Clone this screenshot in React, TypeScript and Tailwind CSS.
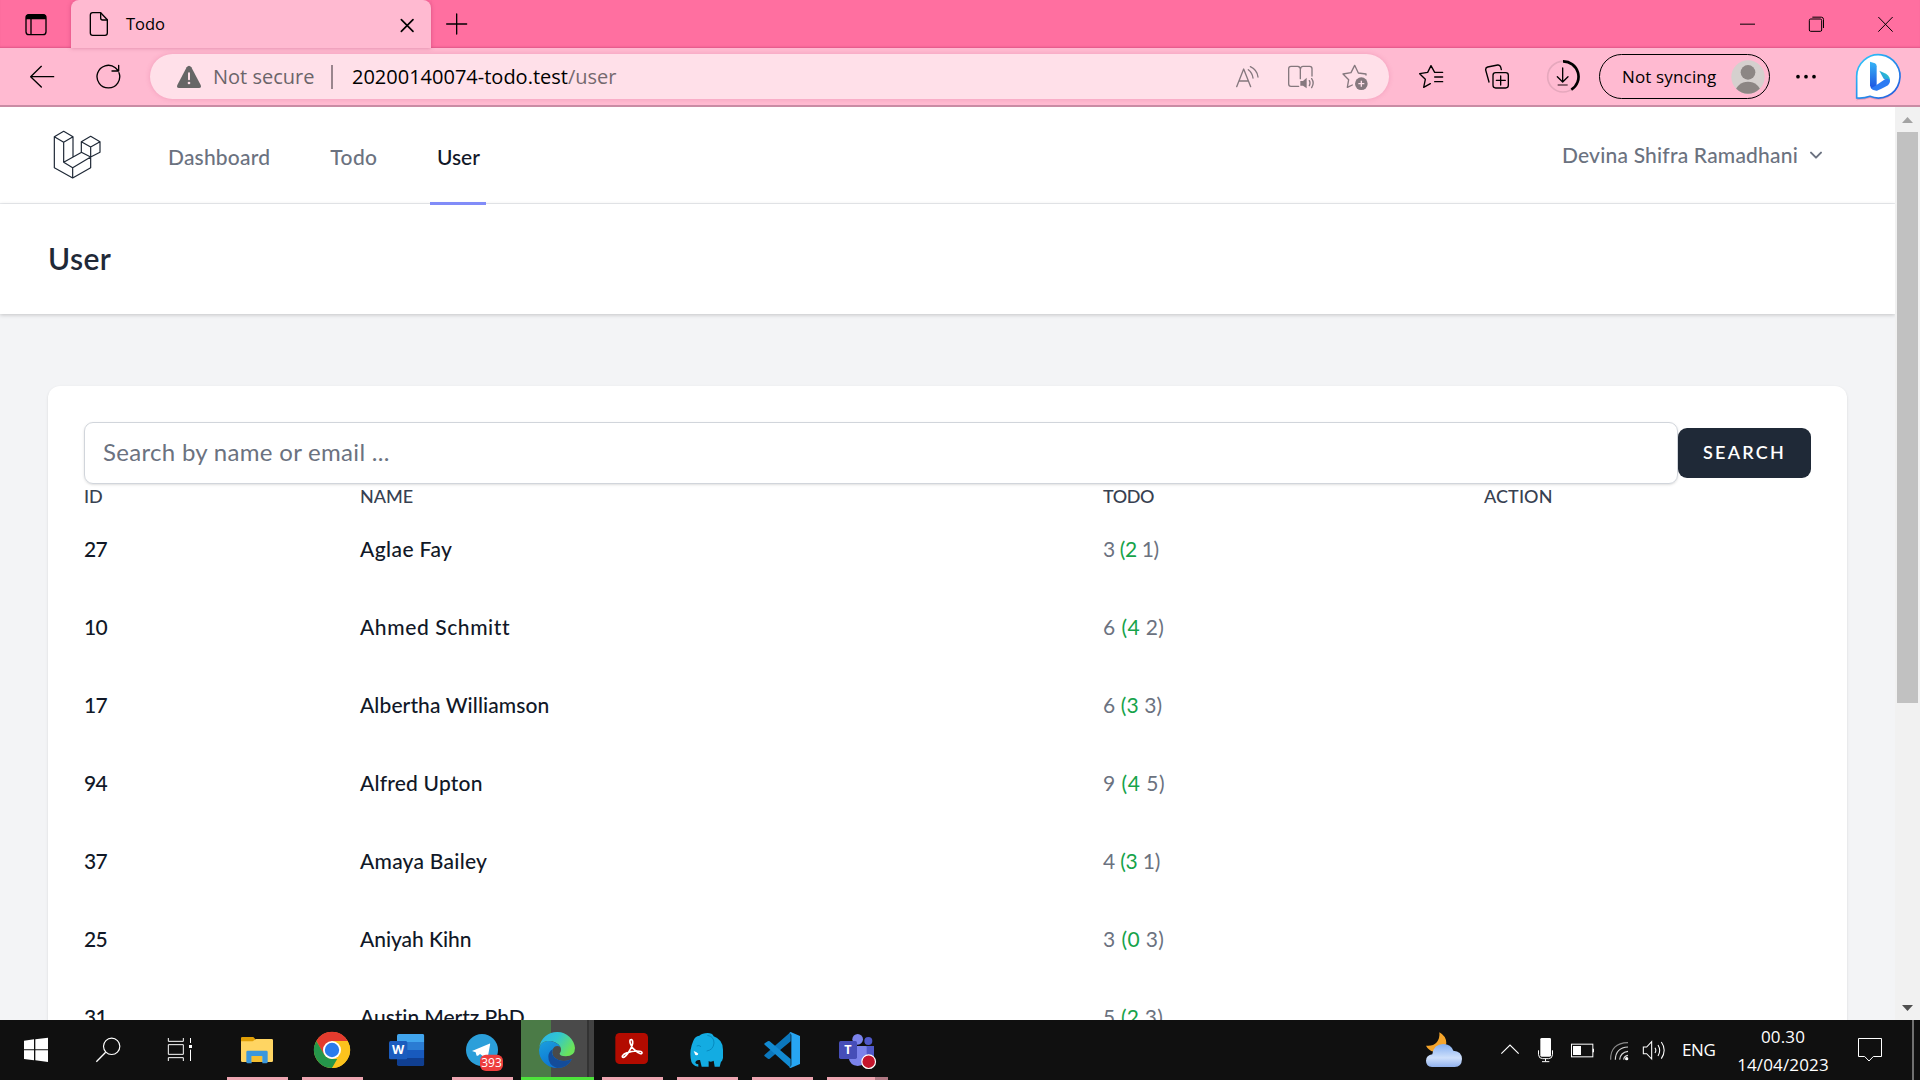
import React from "react";

type DrawingProps = {
  box: [number, number, number, number];
  className?: string;
  children: React.ReactNode;
};

/* Drawings use three units per pixel. */
function Drawing({ box, className = "", children }: DrawingProps) {
  return (
    <svg
      width={box[2] / 3}
      height={box[3] / 3}
      viewBox={box.join(" ")}
      fill="none"
      className={`block shrink-0 ${className}`}
    >
      {children}
    </svg>
  );
}

const line = {
  stroke: "currentColor",
  strokeWidth: 4,
  strokeLinecap: "round" as const,
  strokeLinejoin: "round" as const,
};

function TabStrip() {
  return (
    <div className="flex h-12 bg-[#ff6fa0] text-black">
      <div className="flex w-[71px] items-center justify-center shadow-[inset_0_-2px_2px_-1px_rgba(150,30,80,0.3)]">
        <Drawing box={[75, 37, 66, 69]}>
          <rect x="78" y="42" width="60" height="60" rx="9" {...line} />
          <path d="M78 54V49Q79 41 87 41H129Q138 42 138 50V56H78Z" fill="currentColor" />
          <path d="M93 55V101" {...line} />
        </Drawing>
      </div>
      <div className="flex w-[360px] items-center rounded-t-lg bg-[#ffbad1] pl-[18px] pr-4 shadow-[0_0_4px_rgba(150,30,80,0.35)]">
        <Drawing box={[267, 33, 60, 78]}>
          <path d="M278 38H302L322 59V99Q322 106 315 106H278Q271 106 271 99V45Q271 38 278 38Z" {...line} />
          <path d="M302 39V54Q302 60 308 60H321" {...line} />
        </Drawing>
        <span className="ml-[17px] text-[16.5px]">Todo</span>
        <Drawing box={[1197, 49, 48, 48]} className="ml-auto mt-px">
          <path d="M1204 57L1239 92M1239 57L1204 92" {...line} strokeWidth={5} />
        </Drawing>
      </div>
      <div className="flex flex-1 items-center pl-[14px] shadow-[inset_0_-2px_2px_-1px_rgba(150,30,80,0.3)]">
        <Drawing box={[1335, 37, 69, 66]}>
          <path d="M1340 70H1400M1370 40V100" {...line} />
        </Drawing>
        <div className="ml-auto flex items-center pr-[26px]">
          <Drawing box={[447, 46, 51, 51]}>
            <path d="M450 70.5H495" stroke="black" strokeWidth="3" />
          </Drawing>
          <Drawing box={[654, 46, 51, 51]} className="ml-[52px]">
            <rect x="658" y="55" width="37" height="37" rx="4" stroke="black" strokeWidth="3" />
            <path d="M667 49.500H694Q700.500 50 700.500 56V82" stroke="black" strokeWidth="3" />
          </Drawing>
          <Drawing box={[861, 46, 51, 51]} className="ml-[52px]">
            <path d="M865 49L908 93M908 49L865 93" stroke="black" strokeWidth="3" />
          </Drawing>
        </div>
      </div>
    </div>
  );
}

function Toolbar() {
  return (
    <div className="flex h-[59px] items-center border-b-2 border-[#c98ca4] bg-[#ffbad1] pl-[29px] text-black">
      <Drawing box={[87, 192, 78, 72]}>
        <path d="M161 227H92M124 196L92 227L124 258" {...line} />
      </Drawing>
      <Drawing box={[285, 192, 78, 75]} className="ml-10">
        <path d="M357 218A34 34 0 1 1 346 203L355 212M356 196V213H336" {...line} />
      </Drawing>
      <div className="ml-[29px] flex h-[45px] w-[1239px] items-center rounded-full bg-[#ffe0e9] pl-[27px] pr-[21px] text-[20px] shadow-[0_0_5px_rgba(190,60,110,0.22)]">
        <Drawing box={[531, 192, 72, 72]} className="text-[#666]">
          <path d="M560 199Q567 190 574 199L602 252Q605 261 597 261H537Q529 261 532 252Z" fill="currentColor" />
          <path d="M567 217V235" stroke="#ffe0e9" strokeWidth="6" strokeLinecap="round" />
          <circle cx="567" cy="246" r="4" fill="#ffe0e9" />
        </Drawing>
        <span className="ml-3 w-[118px] text-[#6b656a]">Not secure</span>
        <span className="h-6 w-0.5 bg-[#9a858d]" />
        <span className="ml-[19px]">
          20200140074-todo.test<span className="text-[#75696f]">/user</span>
        </span>
        <div className="ml-auto flex items-center text-[#85787e]">
          <Drawing box={[45, 70, 75, 72]}>
            <path d="M50 135L71 82L92 135M57 118H85M85 84Q97 93 99 109M91 75Q112 85 114 106" {...line} />
          </Drawing>
          <Drawing box={[201, 72, 84, 78]} className="ml-[27px]">
            <path d="M236 139H213Q206 139 206 132V86Q206 79 213 79H233Q241 80 241 87V116M241 88Q242 79 249 79H269Q276 79 276 86V108" {...line} />
            <path d="M241 123H249L260 113V145L249 137H241Z" fill="currentColor" />
            <path d="M268 122Q272 129 268 137M275 116Q284 129 275 143" {...line} />
          </Drawing>
          <Drawing box={[366, 72, 78, 78]} className="ml-[27px]">
            <path d="M438 105L438 102L415 99L404 76L393 98L369 102L386 119L382 142L397 135" {...line} />
            <circle cx="424" cy="131" r="19" fill="currentColor" />
            <path d="M415 131H433M424 122V140" stroke="#ffe0e9" strokeWidth="4" />
          </Drawing>
        </div>
      </div>
      <Drawing box={[594, 72, 78, 78]} className="ml-[29px]">
        <path d="M654 97H644L633 77L623 97L599 101L616 118L611 142L631 131M644 97H668M644 111H668M644 125H668" {...line} />
      </Drawing>
      <Drawing box={[792, 72, 78, 78]} className="ml-10">
        <rect x="819" y="98" width="46" height="46" rx="8" {...line} />
        <path d="M829 121H856M842 108V135M807 126L797 90Q796 83 803 81L833 75Q840 74 842 81L844 89" {...line} />
      </Drawing>
      <Drawing box={[978, 60, 102, 102]} className="ml-9">
        <circle cx="1029" cy="110" r="46" stroke="#e6a8bd" strokeWidth="5" />
        <path d="M1029 64A46 46 0 0 1 1054 149" stroke="black" strokeWidth="8" />
        <path d="M1028 84V124M1012 110L1028 126L1044 110" {...line} />
        <path d="M1013 135H1043" stroke="#76505d" strokeWidth="5" />
      </Drawing>
      <div className="ml-[19px] flex h-[45px] w-[171px] items-center rounded-full border-[1.5px] border-black pl-[22px] pr-[4px] text-[17px] tracking-[0.15px]">
        <span className="whitespace-nowrap">Not syncing</span>
        <Drawing box={[423, 180, 102, 102]} className="ml-auto">
          <clipPath id="avatar"><circle cx="474" cy="231" r="50" /></clipPath>
          <g clipPath="url(#avatar)">
            <rect x="423" y="180" width="102" height="102" fill="#d5d0ce" />
            <circle cx="474" cy="217" r="22" fill="#8c8684" />
            <ellipse cx="474" cy="278" rx="38" ry="33" fill="#8c8684" />
          </g>
        </Drawing>
      </div>
      <Drawing box={[615, 216, 66, 27]} className="ml-[25px]">
        <g fill="black">
          <circle cx="624" cy="230" r="5.500" />
          <circle cx="648" cy="230" r="5.500" />
          <circle cx="672" cy="230" r="5.500" />
        </g>
      </Drawing>
      <Drawing box={[792, 156, 147, 150]} className="ml-[37px]">
        <defs>
          <linearGradient id="bingRing" x1="0" y1="0" x2="1" y2="1">
            <stop stopColor="#30cdfb" />
            <stop offset="1" stopColor="#2056dd" />
          </linearGradient>
          <linearGradient id="bingStem" x1="0" y1="0" x2="0" y2="1">
            <stop stopColor="#36b5f6" />
            <stop offset="1" stopColor="#1b4ee0" />
          </linearGradient>
          <linearGradient id="bingBowl" x1="1" y1="0" x2="0" y2="1">
            <stop stopColor="#2fd8bd" />
            <stop offset="1" stopColor="#2483f4" />
          </linearGradient>
        </defs>
        <path d="M802 299Q800 302 800 293V229A65 65 0 1 1 840 290Q822 297 801 296Z" transform="translate(0 4)" fill="#b05c83" opacity=".35" />
        <path d="M800 294V229A65 65 0 1 1 840 289Q820 296 800 294Z" fill="white" stroke="url(#bingRing)" strokeWidth="5" />
        <path d="M840 185L855 190Q860 193 860 199V260L849 269Q840 264 840 256Z" fill="url(#bingStem)" />
        <path d="M868 212L888 221Q903 231 899 245L881 236Z" fill="url(#bingBowl)" />
        <path d="M843 264Q850 273 861 272Q868 271 894 256Q902 247 899 241Q895 233 885 238L854 259Z" fill="#2b7bf3" />
      </Drawing>
    </div>
  );
}

function LaravelLogo() {
  return (
    <Drawing box={[159, 390, 144, 148]} className="text-[#1f2937]">
      <path
        d="M191 394L163 410L191 427L219 410ZM163 410V503L218 534L272 503V471M191 427V487L218 503L272 471M219 410V471M218 503V534M191 487L245 457M272 409L244 425L272 441L300 425ZM244 425V457L272 471L300 457V425M272 441V471"
        stroke="currentColor"
        strokeWidth="3.600"
        strokeLinejoin="round"
      />
    </Drawing>
  );
}

type User = { id: number; name: string; spacing: string; total: number; done: number; open: number; countSpacing: string };

const users: User[] = [
  { id: 27, name: "Aglae Fay", spacing: "tracking-[0.4px]", total: 3, done: 2, open: 1, countSpacing: "tracking-[-0.4px]" },
  { id: 10, name: "Ahmed Schmitt", spacing: "tracking-[0.6px]", total: 6, done: 4, open: 2, countSpacing: "tracking-[0.4px]" },
  { id: 17, name: "Albertha Williamson", spacing: "tracking-[0.1px]", total: 6, done: 3, open: 3, countSpacing: "tracking-[0.1px]" },
  { id: 94, name: "Alfred Upton", spacing: "tracking-[0.2px]", total: 9, done: 4, open: 5, countSpacing: "tracking-[0.5px]" },
  { id: 37, name: "Amaya Bailey", spacing: "tracking-[0.25px]", total: 4, done: 3, open: 1, countSpacing: "tracking-[-0.2px]" },
  { id: 25, name: "Aniyah Kihn", spacing: "tracking-[-0.05px]", total: 3, done: 0, open: 3, countSpacing: "tracking-[0.4px]" },
  { id: 31, name: "Austin Mertz PhD", spacing: "tracking-[-0.05px]", total: 5, done: 2, open: 3, countSpacing: "tracking-[0.2px]" },
];

const columns = "grid grid-cols-[276px_743px_381px_1fr] items-center";

function UserTable() {
  return (
    <div className="-mt-px">
      <div className={`${columns} h-[27px] text-[18px] font-medium text-[#374151]`}>
        <span>ID</span>
        <span>NAME</span>
        <span className="tracking-[-0.4px]">TODO</span>
        <span className="tracking-[0.1px]">ACTION</span>
      </div>
      {users.map((user) => (
        <div key={user.id} className={`${columns} h-[78px] text-[21px] font-medium text-[#111827]`}>
          <span className="tracking-[-0.6px]">{user.id}</span>
          <span className={user.spacing}>{user.name}</span>
          <span className={`font-normal text-[#6b7280] ${user.countSpacing}`}>
            {user.total} <span className="text-[#16a34a]">({user.done}</span> {user.open})
          </span>
        </div>
      ))}
    </div>
  );
}

function Page() {
  return (
    <div className="flex h-[913px] overflow-hidden bg-[#f3f4f6] font-['Lato',sans-serif]">
      <div className="flex-1">
        <nav className="flex h-[97px] items-stretch border-b border-[#eceef1] bg-white pl-[53px] pr-[72px] text-[21px] font-medium text-[#6b7280]">
          <div className="flex items-center">
            <LaravelLogo />
          </div>
          <div className="ml-[67px] flex items-center pt-[3px] tracking-[0.2px]">Dashboard</div>
          <div className="ml-[60px] flex items-center pt-[3px] tracking-[0.4px]">Todo</div>
          <div className="-mb-0.5 ml-[53px] flex w-14 items-center justify-center border-b-[3px] border-[#818cf8] pt-[5px] text-[#111827]">
            User
          </div>
          <div className="ml-auto flex items-center pb-px tracking-[0.2px]">
            Devina Shifra Ramadhani
            <Drawing box={[657, 446, 42, 36]} className="ml-[11px]">
              <path d="M663 457L678 472L693 457" stroke="currentColor" strokeWidth="6" strokeLinecap="round" strokeLinejoin="round" />
            </Drawing>
          </div>
        </nav>
        <header className="flex h-[110px] items-center bg-white pb-0.5 pl-12 shadow-[0_1px_4px_rgba(0,0,0,0.2)]">
          <h1 className="text-[30px] font-semibold tracking-[0.4px] text-[#1f2937]">User</h1>
        </header>
        <main className="ml-12 mr-12 mt-[72px] h-[700px] rounded-xl bg-white px-9 pt-9 shadow-sm">
          <div className="flex items-center">
            <div className="flex h-[62px] flex-1 items-center rounded-[9px] border border-[#d1d5db] pb-0.5 pl-[18px] text-[24px] tracking-[0.3px] text-[#6b7280] shadow-sm">
              Search by name or email ...
            </div>
            <button className="h-[50px] w-[133px] rounded-[9px] bg-[#1f2937] pb-0.5 text-[18px] font-semibold tracking-[2.2px] text-white">
              SEARCH
            </button>
          </div>
          <UserTable />
        </main>
      </div>
      <div className="flex w-[25px] flex-col items-center justify-between bg-[#f1f1f1]">
        <Drawing box={[927, 321, 51, 75]}>
          <path d="M936 369L952.500 351L969 369Z" fill="#a3a3a3" />
        </Drawing>
        <div className="h-[571px] w-[21px] bg-[#c1c1c1]" />
        <div className="flex-1" />
        <Drawing box={[0, 0, 51, 75]}>
          <path d="M9 30L25.500 48L42 30Z" fill="#505050" />
        </Drawing>
      </div>
    </div>
  );
}

type Task = { x: number; bar: string; art: React.ReactNode };

const running = "mx-[7px] bg-[#eda5b1]";

const tasks: Task[] = [
  {
    x: 660,
    bar: running,
    art: (
      <>
        <path d="M723 84Q723 81 727 81H760L768 89V100H723Z" fill="#e09f06" />
        <path d="M723 94H758L768 87H815Q819 87 819 91V152Q819 156 815 156H727Q723 156 723 152Z" fill="#ffd562" />
        <path d="M739 126Q739 122 743 122H799Q803 122 803 126V156Q803 160 799 160H787V139H755V160H743Q739 160 739 156Z" fill="#3b97dc" />
        <rect x="755" y="138" width="31" height="18" fill="#f5bf31" />
      </>
    ),
  },
  {
    x: 885,
    bar: running,
    art: (
      <>
        <circle cx="996" cy="120" r="54" fill="#fcc31d" />
        <path d="M949 93A54 54 0 0 1 1043 93H996L972 134Z" fill="#e33b2e" />
        <path d="M949 93L973 134Q983 147 1000 147H1019L996 174A54 54 0 0 1 949 93Z" fill="#25964a" />
        <path d="M1019 134L996 174A54 54 0 0 0 1043 93H996Z" fill="#fcc31d" />
        <circle cx="996" cy="120" r="27" fill="white" />
        <circle cx="996" cy="120" r="21.500" fill="#2a7bec" />
      </>
    ),
  },
  {
    x: 1110,
    bar: "",
    art: (
      <>
        <clipPath id="word"><rect x="1191" y="72" width="82" height="96" rx="5" /></clipPath>
        <g clipPath="url(#word)">
          <rect x="1191" y="72" width="82" height="24" fill="#41a5ee" />
          <rect x="1191" y="96" width="82" height="24" fill="#2b7cd3" />
          <rect x="1191" y="120" width="82" height="24" fill="#185abd" />
          <rect x="1191" y="144" width="82" height="24" fill="#103f91" />
        </g>
        <rect x="1167" y="93" width="55" height="55" rx="5" fill="#1b5cbe" />
        <text x="1194.500" y="133" textAnchor="middle" fontSize="38" fontWeight="700" fill="white">W</text>
      </>
    ),
  },
  {
    x: 15,
    bar: running,
    art: (
      <>
        <circle cx="126" cy="120" r="48" fill="#2b9fda" />
        <path d="M96 123L148 101Q152 100 150 105L143 143Q141 147 137 144L120 132L114 137Q110 139 109 134L107 127ZM111 127L137 110L119 129" fill="white" />
        <rect x="120" y="134" width="69" height="49" rx="18" fill="#ee3e3d" />
        <text x="154.500" y="172" textAnchor="middle" fontSize="36" fill="white">393</text>
      </>
    ),
  },
  {
    x: 240,
    bar: "mx-px bg-[#4de33b]",
    art: (
      <>
        <defs>
          <linearGradient id="edgeTop" x1="0" y1="0" x2="1" y2=".5">
            <stop stopColor="#2bb0ec" />
            <stop offset=".5" stopColor="#31c6d0" />
            <stop offset="1" stopColor="#6be35a" />
          </linearGradient>
          <linearGradient id="edgeSide" x1="0" y1="0" x2=".6" y2="1">
            <stop stopColor="#1b9fde" />
            <stop offset="1" stopColor="#0a6fd0" />
          </linearGradient>
        </defs>
        <rect x="243" y="30" width="90" height="180" fill="#4b7b47" />
        <rect x="333" y="30" width="108" height="180" fill="#4a4a4a" />
        <rect x="441" y="30" width="6" height="180" fill="#333" />
        <rect x="447" y="30" width="15" height="180" fill="#424242" />
        <path d="M298 111A54 54 0 0 1 405 114Q405 139 377 139Q358 139 359 130Q366 121 361 110Q350 93 325 93Q303 95 298 111Z" fill="url(#edgeTop)" />
        <path d="M297 120Q298 96 323 93Q349 93 361 110Q345 103 338 118Q332 140 355 150Q375 158 396 147Q382 174 351 174A54 54 0 0 1 297 120Z" fill="url(#edgeSide)" />
        <path d="M338 118Q330 139 355 150Q375 158 396 147Q382 174 351 174Q324 166 325 139Q326 125 338 118Z" fill="#144c99" />
      </>
    ),
  },
  {
    x: 465,
    bar: running,
    art: (
      <>
        <rect x="526" y="69" width="98" height="93" rx="13" fill="#b30b00" />
        <path d="M573 89C565 89 573 111 583 119C597 132 606 134 606 128C605 122 581 121 562 128C546 133 544 142 550 142C559 141 580 108 578 95Q577 88 573 89Z" stroke="white" strokeWidth="5" />
      </>
    ),
  },
  {
    x: 690,
    bar: running,
    art: (
      <>
        <path d="M760 92Q765 78 778 77Q787 69 803 69Q817 69 821 79Q849 89 849 119V144Q847 154 843 155L839 170H824L821 152Q811 158 806 153V170H785L780 150Q768 148 766 158Q766 162 775 163V170Q754 169 752 145Q748 119 760 92Z" fill="#13ace2" />
        <path d="M802 76Q822 79 822 99Q820 120 800 123M770 108Q777 104 783 110" stroke="#078bc0" strokeWidth="3" />
        <path d="M761 123Q771 126 775 131Q774 137 766 135Z" fill="white" />
      </>
    ),
  },
  {
    x: 915,
    bar: running,
    art: (
      <>
        <path d="M974 134L1052 66V94L989 146Q985 148 981 144L974 139Q971 137 974 134Z" fill="#0b77bd" />
        <path d="M974 104L1052 174V147L989 94Q985 92 981 95L974 100Q971 102 974 104Z" fill="#128ad2" />
        <path d="M1052 66L1080 78V162L1052 174L1047 171Q1054 173 1054 164V76Q1054 68 1047 70Z" fill="#27a5f2" />
      </>
    ),
  },
  {
    x: 1140,
    bar: "ml-[7px] mr-[7px] bg-[linear-gradient(to_right,#eda5b1_48px,#b07883_48px)]",
    art: (
      <>
        <circle cx="1253" cy="88" r="16" fill="#7b83eb" />
        <circle cx="1285" cy="93" r="12" fill="#5059c9" />
        <path d="M1267 108H1302V145Q1299 159 1282 158Z" fill="#5059c9" />
        <path d="M1226 108H1276Q1280 108 1280 112V143Q1277 166 1253 168Q1229 165 1226 143Z" fill="#7b83eb" />
        <rect x="1197" y="93" width="54" height="54" rx="5" fill="#464eb8" />
        <text x="1224" y="132" textAnchor="middle" fontSize="38" fontWeight="700" fill="white">T</text>
        <circle cx="1286" cy="155" r="20.500" fill="#c4152c" stroke="white" strokeWidth="3.500" />
      </>
    ),
  },
];

function Taskbar() {
  return (
    <div className="flex h-[60px] bg-[#101010] text-white">
      <Drawing box={[0, 30, 216, 180]}>
        <path d="M72 92L102 88V118H72ZM106 88L144 83V118H106ZM72 121H102V151L72 147ZM106 121H144V156L106 151Z" fill="white" />
      </Drawing>
      <Drawing box={[216, 30, 216, 180]}>
        <circle cx="335" cy="109" r="24.500" stroke="white" strokeWidth="3.500" />
        <path d="M317 127L289 155" stroke="white" strokeWidth="4" />
      </Drawing>
      <Drawing box={[432, 30, 216, 180]}>
        <path d="M505 84V94H550V84M505 104H550V133H505ZM505 153V143H550V153M571.500 84V99M571.500 119V153" stroke="white" strokeWidth="3" />
        <rect x="567" y="105" width="9" height="9" fill="white" />
      </Drawing>
      <div className="ml-1 flex">
        {tasks.map((task) => (
          <div key={task.x} className="grid w-[75px]">
            <Drawing box={[task.x, 30, 225, 180]} className="col-start-1 row-start-1">
              {task.art}
            </Drawing>
            <div className={`col-start-1 row-start-1 h-[3px] self-end ${task.bar}`} />
          </div>
        ))}
      </div>
      <div className="ml-auto flex items-center">
        <Drawing box={[72, 30, 120, 180]}>
          <defs>
            <linearGradient id="cloud" x1="0" y1="0" x2="0" y2="1">
              <stop stopColor="#83aef0" />
              <stop offset=".6" stopColor="#cfe0fb" />
              <stop offset="1" stopColor="#91b2ee" />
            </linearGradient>
          </defs>
          <path d="M118 67Q139 78 139 100Q132 126 101 125Q85 121 78 107Q98 110 111 96Q120 84 118 67Z" fill="#f5a52b" />
          <path d="M96 171Q78 170 78 152Q79 135 97 133Q101 102 130 102Q153 103 160 122Q185 123 186 147Q185 171 164 171Z" fill="url(#cloud)" />
        </Drawing>
        <Drawing box={[300, 30, 60, 180]} className="ml-9">
          <path d="M304 131L330 105L356 131" stroke="white" strokeWidth="3.500" />
        </Drawing>
        <Drawing box={[411, 30, 51, 180]} className="ml-[17px]">
          <rect x="421" y="84" width="32" height="56" rx="4" fill="white" />
          <path d="M415.500 121V134Q416 146 428 146H446Q457 146 457.500 134V121M436.500 146V154M426 155H448" stroke="white" strokeWidth="3" />
        </Drawing>
        <Drawing box={[510, 30, 75, 180]} className="ml-4">
          <rect x="514.500" y="102.500" width="64" height="38" stroke="white" strokeWidth="3" />
          <rect x="519" y="108" width="24" height="27" fill="white" />
          <path d="M580 116V127" stroke="white" strokeWidth="4" />
        </Drawing>
        <Drawing box={[627, 30, 63, 180]} className="ml-3.5">
          <path d="M632 149Q631 99 684 98" stroke="#8b8b8b" strokeWidth="3.500" />
          <path d="M646 149Q647 113 684 111M659 149Q661 127 684 124M671 149Q672 138 684 136" stroke="#d7d7d7" strokeWidth="3.500" />
          <circle cx="680" cy="146" r="5" fill="white" />
        </Drawing>
        <Drawing box={[726, 30, 72, 180]} className="ml-3">
          <path d="M730 111H740L755 95V147L740 131H730ZM765 113Q770 121 765 129M774 105Q784 121 774 138M784 96Q801 120 784 146" stroke="white" strokeWidth="3.200" />
        </Drawing>
        <span className="ml-4 w-[54px] text-[17px] tracking-[-0.4px]">ENG</span>
        <div className="flex w-[94px] flex-col pt-px text-center text-[17px] leading-7 tracking-[0.15px]">
          <span>00.30</span>
          <span>14/04/2023</span>
        </div>
        <Drawing box={[1371, 30, 78, 180]} className="ml-[27px]">
          <path d="M1375.500 85.500H1444.500V139.500H1420L1407 153L1394 139.500H1375.500Z" stroke="white" strokeWidth="3" />
        </Drawing>
        <div className="ml-[29px] mr-1.5 h-full w-0.5 bg-[#707070]" />
      </div>
    </div>
  );
}

export default function App() {
  return (
    <div className="h-[1080px] w-[1920px] overflow-hidden font-['Open_Sans',sans-serif]">
      <TabStrip />
      <Toolbar />
      <Page />
      <Taskbar />
    </div>
  );
}
